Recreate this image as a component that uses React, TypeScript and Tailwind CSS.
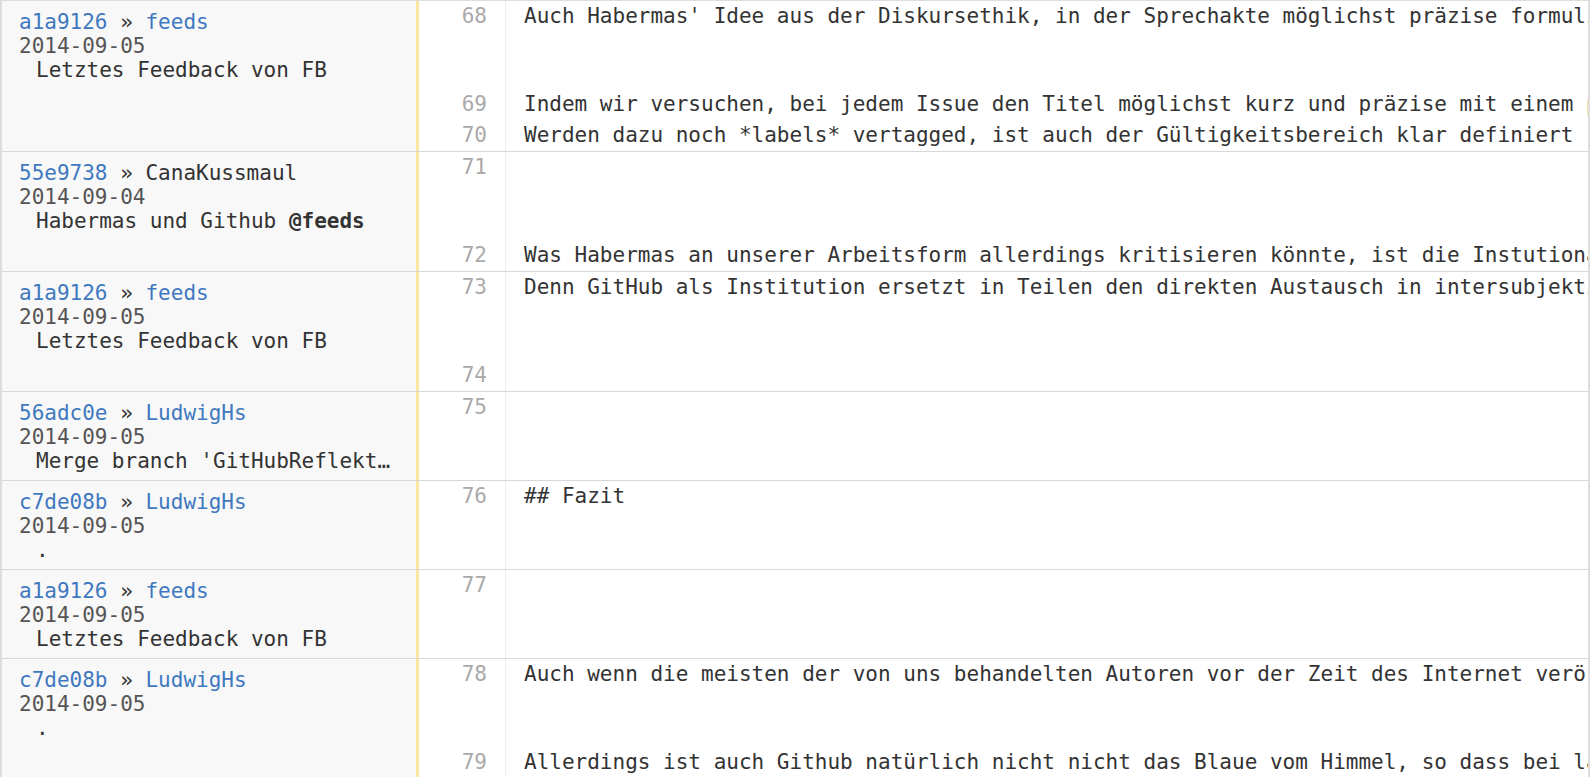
import React from "react";

type Group = {
  sha: string;
  author: string;
  authorLink: boolean;
  date: string;
  message: React.ReactNode;
  lines: [number, string][];
};

const groups: Group[] = [
  {
    sha: "a1a9126",
    author: "feeds",
    authorLink: true,
    date: "2014-09-05",
    message: "Letztes Feedback von FB",
    lines: [
      [68, "Auch Habermas' Idee aus der Diskursethik, in der Sprechakte möglichst präzise formuliert werden sollen, findet sich hier wieder."],
      [69, "Indem wir versuchen, bei jedem Issue den Titel möglichst kurz und präzise mit einem prägnanten Begriff zu versehen,"],
      [70, "Werden dazu noch *labels* vertagged, ist auch der Gültigkeitsbereich klar definiert"],
    ],
  },
  {
    sha: "55e9738",
    author: "CanaKussmaul",
    authorLink: false,
    date: "2014-09-04",
    message: (
      <>
        Habermas und Github <b className="font-bold">@feeds</b>
      </>
    ),
    lines: [
      [71, ""],
      [72, "Was Habermas an unserer Arbeitsform allerdings kritisieren könnte, ist die Instutionalisierung der Kommunikation."],
    ],
  },
  {
    sha: "a1a9126",
    author: "feeds",
    authorLink: true,
    date: "2014-09-05",
    message: "Letztes Feedback von FB",
    lines: [
      [73, "Denn GitHub als Institution ersetzt in Teilen den direkten Austausch in intersubjektiven Beziehungen."],
      [74, ""],
    ],
  },
  {
    sha: "56adc0e",
    author: "LudwigHs",
    authorLink: true,
    date: "2014-09-05",
    message: "Merge branch 'GitHubReflektion'",
    lines: [[75, ""]],
  },
  {
    sha: "c7de08b",
    author: "LudwigHs",
    authorLink: true,
    date: "2014-09-05",
    message: ".",
    lines: [[76, "## Fazit"]],
  },
  {
    sha: "a1a9126",
    author: "feeds",
    authorLink: true,
    date: "2014-09-05",
    message: "Letztes Feedback von FB",
    lines: [[77, ""]],
  },
  {
    sha: "c7de08b",
    author: "LudwigHs",
    authorLink: true,
    date: "2014-09-05",
    message: ".",
    lines: [
      [78, "Auch wenn die meisten der von uns behandelten Autoren vor der Zeit des Internet veröffentlicht haben,"],
      [79, "Allerdings ist auch Github natürlich nicht nicht das Blaue vom Himmel, so dass bei langen Diskussionen"],
    ],
  },
];

function BlameGroup({ group }: { group: Group }) {
  return (
    <div className="flex border-b border-[#d8d8d8]">
      <div className="w-[414px] shrink-0 bg-[#f8f8f8] pl-[17px] pr-[20px] pt-[9px] leading-[24px]">
        <div className="whitespace-pre">
          <span className="text-[#4078c0]">{group.sha}</span>
          <span className="text-[#333]"> » </span>
          <span className={group.authorLink ? "text-[#4078c0]" : "text-[#333]"}>{group.author}</span>
        </div>
        <div className="text-[#555]">{group.date}</div>
        <div className="pl-[17px] truncate text-[#333]">{group.message}</div>
      </div>
      <div className="w-[3px] shrink-0 bg-[#fbe6a2]" />
      <div className="flex-1 min-w-0">
        {group.lines.map(([num, text], i) => (
          <div key={num} className={`flex ${i === 0 ? "h-[88px]" : "h-[31px]"}`}>
            <div className="w-[87px] shrink-0 text-right pr-[18px] text-[#aaa] border-r border-[#eee] leading-[30px]">
              {num}
            </div>
            <div className="flex-1 min-w-0 pl-[18px] whitespace-pre overflow-hidden leading-[30px] text-[#333]">
              {text}
            </div>
          </div>
        ))}
      </div>
    </div>
  );
}

export default function App() {
  return (
    <div className="w-[1590px] h-[777px] overflow-hidden bg-white font-['DejaVu_Sans_Mono',monospace] text-[21px]">
      <div className="border-t border-r-2 border-l-2 border-[#ddd]">
        {groups.map((g, i) => (
          <BlameGroup key={i} group={g} />
        ))}
      </div>
    </div>
  );
}
